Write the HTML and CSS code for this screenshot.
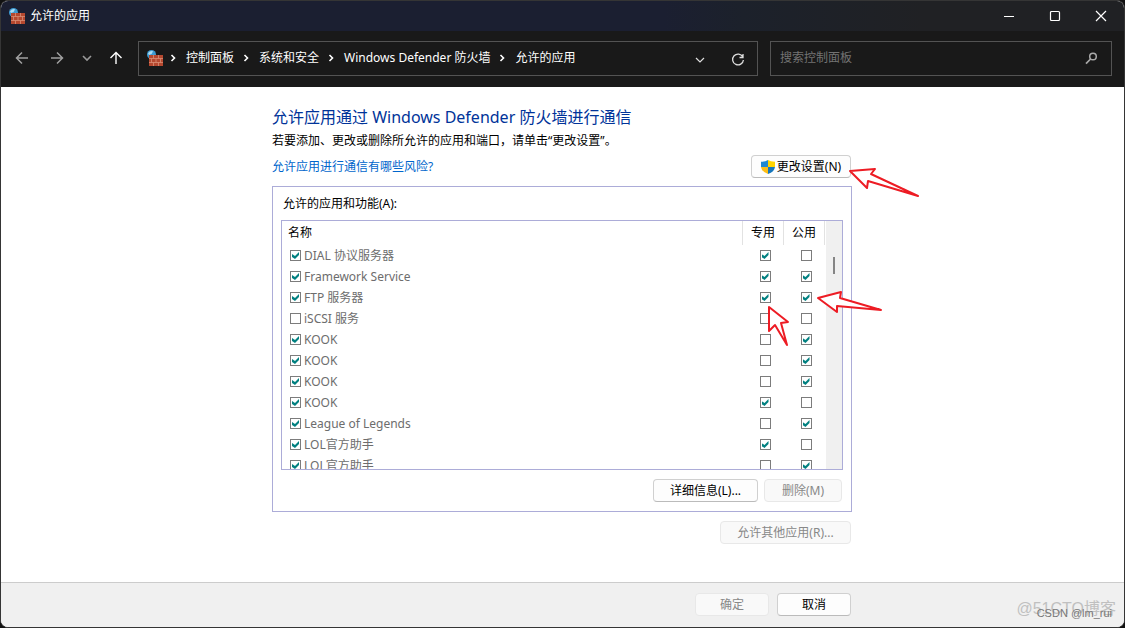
FILE: index.html
```html
<!DOCTYPE html>
<html lang="zh-CN">
<head>
<meta charset="utf-8">
<title>允许的应用</title>
<link rel="stylesheet" href="styles.css">
</head>
<body>
<svg class="defs" width="0" height="0" aria-hidden="true">
  <symbol id="firewall" viewBox="0 0 16 16">
    <circle cx="4.500" cy="4.500" r="4.500" fill="#3d9bd2"/>
    <path d="M1 3.200Q3 .6 6 1.200L4.600 4 2 5Z" fill="#a9dcf4"/>
    <path d="M2 5h14v11H2z" fill="#b5482f"/>
    <path d="M2 8.500h14M2 12.500h14M6.500 5v3.500M11.500 5v3.500M4.500 8.500v4M9 8.500v4M13.500 8.500v4M6.500 12.500V16M11.500 12.500V16" stroke="#d98f76" stroke-width=".8" fill="none"/>
  </symbol>
  <symbol id="sep" viewBox="0 0 6 8">
    <path d="M1.500 1 4.500 4 1.500 7" fill="none" stroke="#fff" stroke-width="1.600"/>
  </symbol>
</svg>
<div class="window">
  <header class="titlebar">
    <svg class="app-icon"><use href="#firewall"/></svg>
    <span class="title">允许的应用</span>
    <div class="controls">
      <button type="button" aria-label="最小化"><svg width="12" height="12"><path d="M1 6.500h10" stroke="#fff"/></svg></button>
      <button type="button" aria-label="最大化"><svg width="12" height="12"><rect x="1.500" y="1.500" width="9" height="9" rx="1" fill="none" stroke="#fff" stroke-width="1.200"/></svg></button>
      <button type="button" aria-label="关闭"><svg width="12" height="12"><path d="M1 1l10 10M11 1 1 11" stroke="#fff" stroke-width="1.200"/></svg></button>
    </div>
  </header>
  <nav class="toolbar">
    <div class="history">
      <button type="button" aria-label="后退"><svg width="14" height="14"><path d="M13 7H1.500M7 1.500 1.500 7 7 12.500" fill="none" stroke="#a0a0a0" stroke-width="1.500"/></svg></button>
      <button type="button" aria-label="前进"><svg width="14" height="14"><path d="M1 7h11.500M7 1.500 12.500 7 7 12.500" fill="none" stroke="#a0a0a0" stroke-width="1.500"/></svg></button>
      <button type="button" class="recent" aria-label="最近位置"><svg width="10" height="14"><path d="M1 5l4 4 4-4" fill="none" stroke="#999" stroke-width="1.600"/></svg></button>
      <button type="button" class="up" aria-label="向上"><svg width="14" height="14"><path d="M7 13V1.500M1.500 7 7 1.500 12.500 7" fill="none" stroke="#fff" stroke-width="1.400"/></svg></button>
    </div>
    <div class="address">
      <svg class="app-icon"><use href="#firewall"/></svg>
      <svg class="sep"><use href="#sep"/></svg><a href="#">控制面板</a>
      <svg class="sep"><use href="#sep"/></svg><a href="#">系统和安全</a>
      <svg class="sep"><use href="#sep"/></svg><a href="#">Windows Defender 防火墙</a>
      <svg class="sep"><use href="#sep"/></svg><a href="#">允许的应用</a>
      <div class="address-actions">
        <button type="button" aria-label="历史记录"><svg width="10" height="10"><path d="M1 3l4 4 4-4" fill="none" stroke="#ddd" stroke-width="1.200"/></svg></button>
        <button type="button" aria-label="刷新"><svg width="14" height="14"><path d="M11.800 4A5.400 5.400 0 1 0 12.400 7M12 1v3.500H8.500" fill="none" stroke="#ddd" stroke-width="1.300"/></svg></button>
      </div>
    </div>
    <div class="search">
      <input type="text" placeholder="搜索控制面板" aria-label="搜索控制面板">
      <svg width="13" height="13"><circle cx="8" cy="4.500" r="3.300" fill="none" stroke="#aaa" stroke-width="1.500"/><path d="M5.600 7 1 11.600" stroke="#aaa" stroke-width="1.700"/></svg>
    </div>
  </nav>
  <main class="content">
    <div class="panel">
      <h1>允许应用通过 Windows Defender 防火墙进行通信</h1>
      <p class="intro">若要添加、更改或删除所允许的应用和端口，请单击<span class="quote">“</span>更改设置<span class="quote">”</span>。</p>
      <div class="link-row">
        <a href="#">允许应用进行通信有哪些风险?</a>
        <button type="button" class="btn change">
          <svg width="14" height="14" viewBox="0 0 14 14"><path d="M7 0Q4.500 1.700 0 1.700V7h7z" fill="#1e88d2"/><path d="M7 0Q9.500 1.700 14 1.700V7H7z" fill="#ffd400"/><path d="M0 7q.6 4.800 7 7V7z" fill="#fcbd16"/><path d="M14 7q-.6 4.800-7 7V7z" fill="#1677bd"/></svg>
          更改设置(N)
        </button>
      </div>
      <section class="group">
        <h2>允许的应用和功能(A):</h2>
        <div class="list">
          <table>
            <thead><tr><th class="name">名称</th><th>专用</th><th>公用</th></tr></thead>
            <tbody>
              <tr><td class="name"><label><input type="checkbox" checked>DIAL 协议服务器</label></td><td><input type="checkbox" aria-label="专用" checked></td><td><input type="checkbox" aria-label="公用"></td></tr>
              <tr><td class="name"><label><input type="checkbox" checked>Framework Service</label></td><td><input type="checkbox" aria-label="专用" checked></td><td><input type="checkbox" aria-label="公用" checked></td></tr>
              <tr><td class="name"><label><input type="checkbox" checked>FTP 服务器</label></td><td><input type="checkbox" aria-label="专用" checked></td><td><input type="checkbox" aria-label="公用" checked></td></tr>
              <tr><td class="name"><label><input type="checkbox">iSCSI 服务</label></td><td><input type="checkbox" aria-label="专用"></td><td><input type="checkbox" aria-label="公用"></td></tr>
              <tr><td class="name"><label><input type="checkbox" checked>KOOK</label></td><td><input type="checkbox" aria-label="专用"></td><td><input type="checkbox" aria-label="公用" checked></td></tr>
              <tr><td class="name"><label><input type="checkbox" checked>KOOK</label></td><td><input type="checkbox" aria-label="专用"></td><td><input type="checkbox" aria-label="公用" checked></td></tr>
              <tr><td class="name"><label><input type="checkbox" checked>KOOK</label></td><td><input type="checkbox" aria-label="专用"></td><td><input type="checkbox" aria-label="公用" checked></td></tr>
              <tr><td class="name"><label><input type="checkbox" checked>KOOK</label></td><td><input type="checkbox" aria-label="专用" checked></td><td><input type="checkbox" aria-label="公用"></td></tr>
              <tr><td class="name"><label><input type="checkbox" checked>League of Legends</label></td><td><input type="checkbox" aria-label="专用"></td><td><input type="checkbox" aria-label="公用" checked></td></tr>
              <tr><td class="name"><label><input type="checkbox" checked>LOL官方助手</label></td><td><input type="checkbox" aria-label="专用" checked></td><td><input type="checkbox" aria-label="公用"></td></tr>
              <tr><td class="name"><label><input type="checkbox" checked>LOL官方助手</label></td><td><input type="checkbox" aria-label="专用"></td><td><input type="checkbox" aria-label="公用" checked></td></tr>
            </tbody>
          </table>
          <div class="scrollbar"><div class="thumb"></div></div>
        </div>
        <div class="group-actions">
          <button type="button" class="btn details">详细信息(L)...</button>
          <button type="button" class="btn remove" disabled>删除(M)</button>
        </div>
      </section>
      <div class="other-row"><button type="button" class="btn other" disabled>允许其他应用(R)...</button></div>
      <svg class="arrows" viewBox="0 0 650 460" width="650" height="460" aria-hidden="true">
        <path d="M578 84 603 82 599 87 646 109 596 94 595 101Z"/>
        <path d="M546 211 569 205 568 211 609 223 565 219 565 225Z"/>
        <path d="M497 220 516 235 509 236 515 258 503 238 497 244Z"/>
      </svg>
    </div>
  </main>
  <footer class="footer">
    <div class="footer-actions">
      <button type="button" class="btn" disabled>确定</button>
      <button type="button" class="btn">取消</button>
    </div>
    <span class="mark mark-large">@51CTO博客</span>
    <span class="mark mark-small">CSDN @lm_rui</span>
  </footer>
</div>
</body>
</html>
```
FILE: styles.css
```css
* { box-sizing: border-box; }
body {
  margin: 0;
  background: #111;
  color: #000;
  font: 12px/16px "Noto Sans", "Noto Sans CJK SC", sans-serif;
}
button, input { font: inherit; }
a { color: inherit; text-decoration: none; }
svg { display: block; flex: none; }
.defs { position: absolute; }
.window {
  display: flex;
  flex-direction: column;
  min-height: 100vh;
  border: 1px solid #353535;
  border-radius: 8px;
  overflow: hidden;
  background: #fff;
}
.app-icon { width: 16px; height: 16px; }

.titlebar {
  display: flex;
  align-items: center;
  height: 30px;
  padding-left: 8px;
  gap: 5px;
  color: #fff;
  background: linear-gradient(90deg, #1b1f31 59%, #1c212b 66%, #202124 82%);
}
.controls { display: flex; margin-left: auto; }
.controls button, .history button, .address-actions button {
  display: flex;
  align-items: center;
  justify-content: center;
  padding: 0;
  border: 0;
  background: none;
}
.controls button { width: 46px; height: 30px; }

.toolbar {
  display: flex;
  align-items: center;
  height: 56px;
  padding: 0 12px 2px 14px;
  background: #191919;
  color: #fff;
}
.history { display: flex; align-items: center; width: 123px; gap: 21px; }
.history .recent { margin-right: -4px; margin-left: -3px; }
.address {
  display: flex;
  flex: 1;
  align-items: center;
  height: 35px;
  padding: 0 12px 0 8px;
  border: 1px solid #535353;
}
.address a { white-space: nowrap; }
.sep { width: 6px; height: 8px; margin: 0 10px 0 9px; }
.address .app-icon + .sep { margin-left: 7px; }
.address-actions { display: flex; gap: 26px; margin-left: auto; padding-top: 3px; }
.search {
  display: flex;
  flex: 0 1 342px;
  align-items: center;
  height: 35px;
  margin-left: 12px;
  padding: 0 13px 0 9px;
  border: 1px solid #535353;
}
.search input {
  flex: 1;
  min-width: 0;
  padding: 0;
  border: 0;
  outline: 0;
  background: none;
  color: #fff;
}
.search input::placeholder { color: #737373; }

.content { flex: 1; padding-right: 1px; }
.panel { position: relative; max-width: 580px; margin: 0 auto; padding-top: 18px; }
h1 {
  margin: 0;
  color: #003399;
  font-size: 16px;
  font-weight: 400;
  line-height: 24px;
}
.intro { margin: 4px 0 0; }
.quote { font-family: "Noto Sans", sans-serif; }
.link-row {
  display: flex;
  align-items: center;
  justify-content: space-between;
  margin-top: 6px;
  padding-right: 1px;
  color: #0066cc;
}
.btn {
  display: flex;
  align-items: center;
  justify-content: center;
  height: 23px;
  padding: 0;
  border: 1px solid #d0d0d0;
  border-bottom-color: #bbb;
  border-radius: 4px;
  background: #fdfdfd;
  color: #000;
  white-space: nowrap;
}
.btn:disabled { border-color: #e8e8e8; background: #f9f9f9; color: #888; }
.change { width: 100px; gap: 2px; }

.group { margin-top: 8px; padding: 9px 8px; border: 1px solid #acacd8; }
h2 { margin: 0 0 8px 2px; font-size: 12px; font-weight: 400; line-height: 16px; }
.list {
  display: flex;
  height: 250px;
  border: 1px solid #acacd8;
  overflow: hidden;
}
table { flex: 1; border-collapse: collapse; table-layout: fixed; }
th, td { width: 41px; height: 21px; padding: 0; text-align: center; }
th { height: 24px; border-right: 1px solid #e2e2e2; font-weight: 400; }
td { color: #6d6d6d; }
td:not(.name) { padding-left: 4px; }
.name { width: auto; text-align: left; }
th.name { padding-left: 6px; }
td.name { padding-left: 8px; }
label { display: flex; align-items: center; gap: 3px; line-height: 21px; }
input[type="checkbox"] {
  display: grid;
  flex: none;
  place-content: center;
  width: 11px;
  height: 11px;
  margin: 0 auto;
  border: 1px solid #7c7c7c;
  background: #fff;
  appearance: none;
}
label input[type="checkbox"] { margin: 0; }
input[type="checkbox"]:checked::before {
  content: "";
  width: 7px;
  height: 7px;
  background: #008080;
  clip-path: polygon(0 29%, 43% 57%, 100% 0, 100% 43%, 43% 100%, 0 71%);
}
.scrollbar { width: 16px; margin-left: 1px; padding-top: 36px; background: #f0f0f0; }
.thumb { width: 2px; height: 17px; margin-left: 7px; background: #858585; }
.group-actions { display: flex; justify-content: flex-end; gap: 6px; margin-top: 9px; padding-right: 1px; }
.details { width: 105px; }
.remove { width: 78px; }
.other-row { display: flex; justify-content: flex-end; margin-top: 9px; padding-right: 1px; }
.other { width: 131px; }
.arrows {
  position: absolute;
  top: 0;
  left: 0;
  pointer-events: none;
}
.arrows path { fill: #fff; stroke: #ed1c24; stroke-width: 2; stroke-linejoin: round; }

.footer {
  position: relative;
  height: 45px;
  padding: 10px 1px 0 0;
  border-top: 1px solid #ccc;
  background: #f0f0f0;
}
.footer-actions { display: flex; justify-content: flex-end; gap: 8px; max-width: 580px; margin: 0 auto; padding-right: 1px; }
.footer-actions .btn { width: 74px; }
.mark {
  position: absolute;
  font-family: "Liberation Sans", "Noto Sans CJK SC", sans-serif;
  white-space: nowrap;
}
.mark-large { right: 8px; bottom: 8px; color: #c0c0c0; font-size: 16px; line-height: 20px; }
.mark-small { right: 12px; bottom: 6px; color: #777; font-size: 11px; }
```
